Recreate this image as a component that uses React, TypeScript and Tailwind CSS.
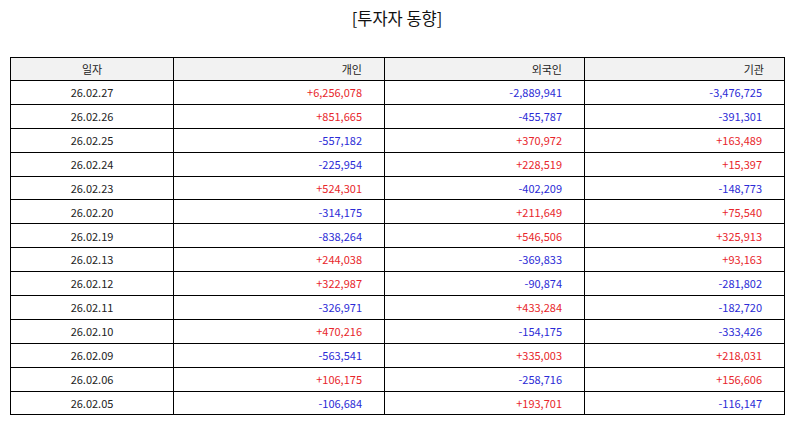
const rows: [string, string, string, string][] = [
  ['26.02.27', '+6,256,078', '-2,889,941', '-3,476,725'],
  ['26.02.26', '+851,665', '-455,787', '-391,301'],
  ['26.02.25', '-557,182', '+370,972', '+163,489'],
  ['26.02.24', '-225,954', '+228,519', '+15,397'],
  ['26.02.23', '+524,301', '-402,209', '-148,773'],
  ['26.02.20', '-314,175', '+211,649', '+75,540'],
  ['26.02.19', '-838,264', '+546,506', '+325,913'],
  ['26.02.13', '+244,038', '-369,833', '+93,163'],
  ['26.02.12', '+322,987', '-90,874', '-281,802'],
  ['26.02.11', '-326,971', '+433,284', '-182,720'],
  ['26.02.10', '+470,216', '-154,175', '-333,426'],
  ['26.02.09', '-563,541', '+335,003', '+218,031'],
  ['26.02.06', '+106,175', '-258,716', '+156,606'],
  ['26.02.05', '-106,684', '+193,701', '-116,147'],
]

function Num({ v }: { v: string }) {
  const up = v.startsWith('+')
  return (
    <td
      className={`border border-black text-right pr-[22px] ${up ? 'text-[#e8262b]' : 'text-[#2b2bd6]'}`}
    >
      {v}
    </td>
  )
}

export default function App() {
  return (
    <div
      className="w-[794px] h-[425px] bg-white px-[10px] pt-[6px]"
      style={{ fontFamily: '"Noto Sans CJK KR", "Noto Sans", sans-serif' }}
    >
      <h1 className="text-center text-[16.5px] leading-[24px] text-[#111]">[투자자 동향]</h1>

      <table className="mt-[27px] w-[774px] border-collapse border border-black text-[11px] text-[#222] table-fixed">
        <colgroup>
          <col className="w-[163px]" />
          <col className="w-[211px]" />
          <col className="w-[200px]" />
          <col className="w-[200px]" />
        </colgroup>
        <thead>
          <tr className="h-[23px] bg-[#f2f2f2]">
            <th className="border border-black font-normal text-center">일자</th>
            <th className="border border-black font-normal text-right pr-[22px]">개인</th>
            <th className="border border-black font-normal text-right pr-[22px]">외국인</th>
            <th className="border border-black font-normal text-right pr-[20px]">기관</th>
          </tr>
        </thead>
        <tbody>
          {rows.map(([d, a, b, c]) => (
            <tr key={d} className="h-[23.9px]">
              <td className="border border-black text-center">{d}</td>
              <Num v={a} />
              <Num v={b} />
              <Num v={c} />
            </tr>
          ))}
        </tbody>
      </table>
    </div>
  )
}
